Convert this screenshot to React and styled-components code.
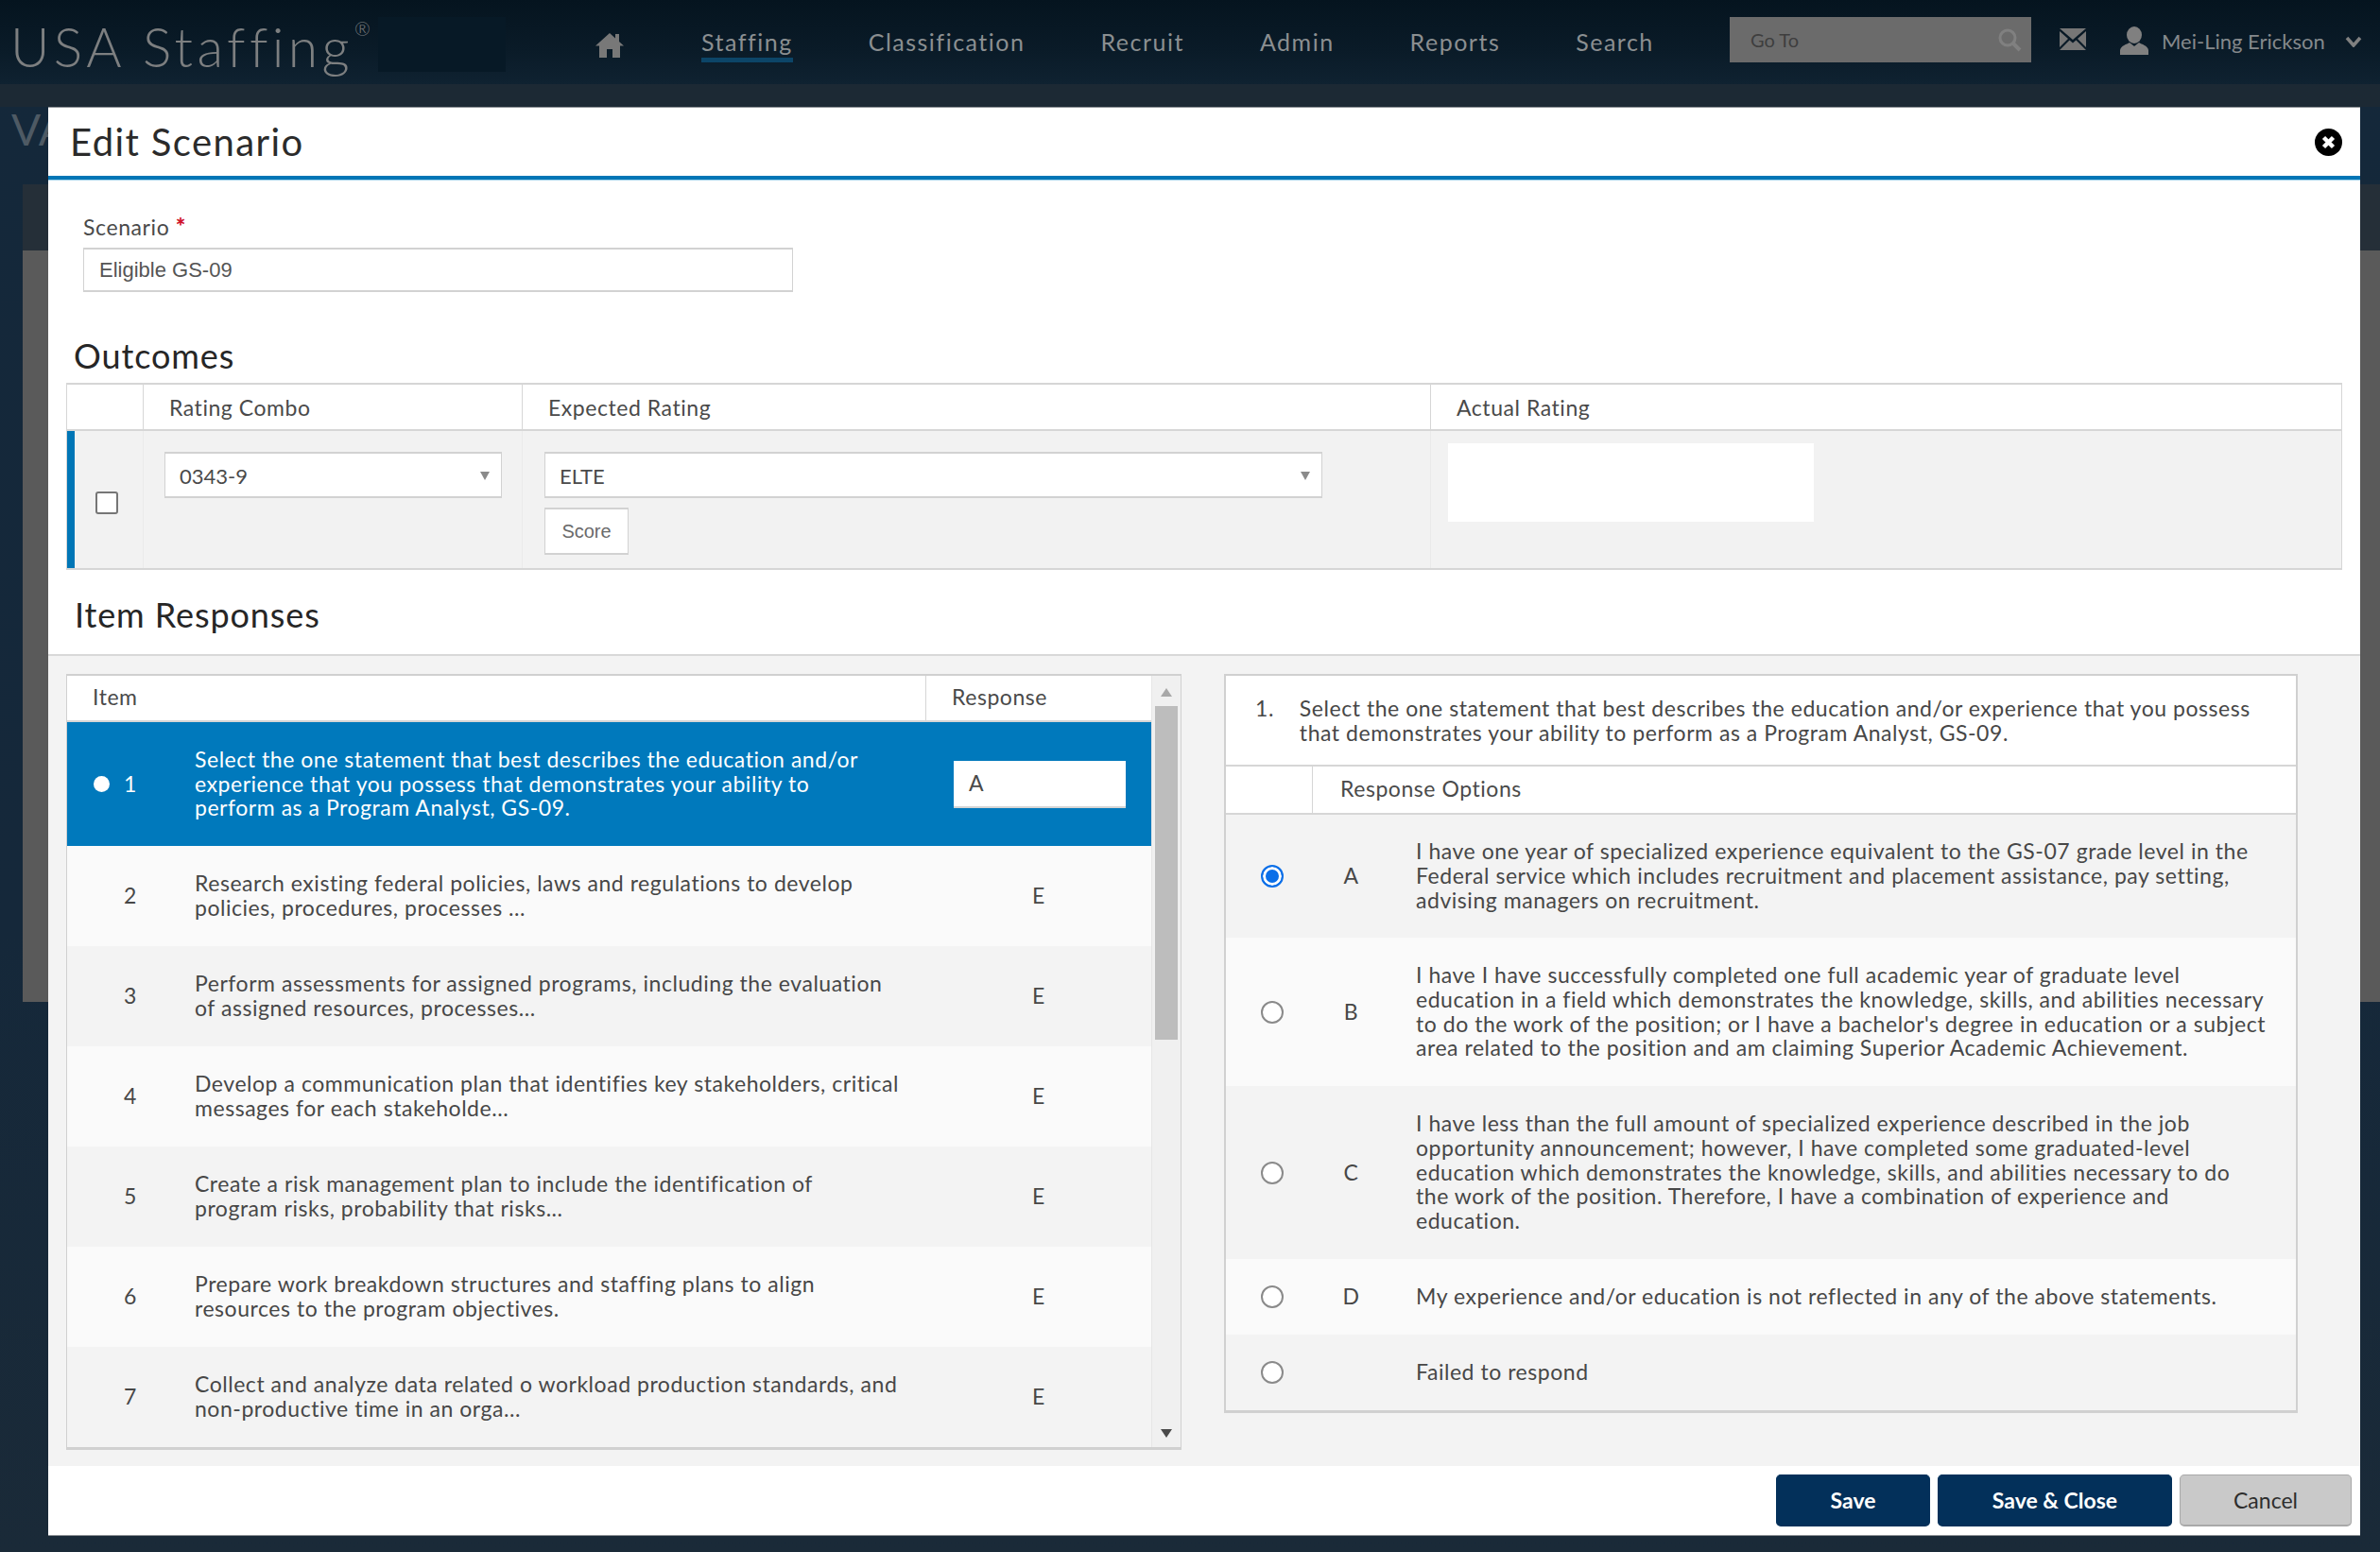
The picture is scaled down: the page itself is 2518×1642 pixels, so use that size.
import React from "react";
import styled, { createGlobalStyle } from "styled-components";

const Global = createGlobalStyle`
  html, body { margin: 0; padding: 0; background: #15283a; }
  * { box-sizing: border-box; }
  body { font-family: Lato, "Noto Sans", sans-serif; }
`;

const Screen = styled.div`
  position: relative;
  width: 2518px;
  height: 1642px;
  overflow: hidden;
  display: flex;
  flex-direction: column;
  background: linear-gradient(180deg, #14283a 0%, #15283a 60%, #1a2a38 100%);
`;
const TopBar = styled.header`
  height: 89px;
  flex: none;
  display: flex;
  align-items: flex-start;
  background: linear-gradient(180deg, #05141f 0%, #0a1b28 60%, #0f2231 100%);
  color: #85898c;
`;
const Logo = styled.div`
  margin-left: 11px;
  margin-top: 18px;
  width: 389px;
  flex: none;
  display: flex;
  align-items: flex-start;
  font-size: 57px;
  line-height: 62px;
  font-weight: 300;
  letter-spacing: 4.4px;
  color: #7d7f80;
  white-space: nowrap;
`;
const LogoMark = styled.span`
  font-size: 20px;
  line-height: 24px;
  letter-spacing: 0;
  margin-left: 1px;
`;
const LogoShade = styled.div`
  width: 135px;
  height: 58px;
  margin-top: 18px;
  flex: none;
  background: #071926;
`;
const HomeLink = styled.div`
  width: 207px;
  flex: none;
  padding: 34px 0 0 95px;
  svg { display: block; }
`;
const Nav = styled.nav`
  display: flex;
  gap: 80px;
  flex: none;
  width: 1088px;
`;
const NavItem = styled.div`
  font-size: 25px;
  line-height: 30px;
  padding-top: 29px;
  height: 66px;
  letter-spacing: 1.5px;
  color: #8b8f91;
  border-bottom: ${(p) => (p.$active ? "5px solid #0c4568" : "none")};
`;
const GoTo = styled.div`
  width: 319px;
  height: 48px;
  margin-top: 18px;
  flex: none;
  background: #6b6b6b;
  display: flex;
  align-items: center;
  justify-content: space-between;
  padding: 0 10px 0 22px;
  font-size: 20px;
  color: #3e3e3e;
`;
const MailIcon = styled.div`
  margin: 30px 0 0 30px;
  flex: none;
  svg { display: block; }
`;
const UserBox = styled.div`
  margin: 28px 0 0 36px;
  display: flex;
  align-items: flex-start;
  flex: none;
  font-size: 22px;
  line-height: 30px;
  color: #85898c;
  svg { display: block; }
`;
const UserName = styled.span`
  margin: 1px 20px 0 14px;
  width: 174px;
  white-space: nowrap;
`;
const Chevron = styled.span`
  margin-top: 10px;
  svg { display: block; }
`;
const SubBand = styled.div`
  height: 24px;
  flex: none;
  background: #1c2934;
`;
const Behind = styled.div`
  flex: 1;
  display: flex;
  flex-direction: column;
  padding: 0 0 0 24px;
  position: relative;
`;
const PageTitle = styled.div`
  font-size: 46px;
  line-height: 48px;
  margin-left: -12px;
  height: 82px;
  color: #4e5a64;
  white-space: nowrap;
`;
const BehindCardHead = styled.div`
  height: 70px;
  background: #252f38;
`;
const BehindCard = styled.div`
  height: 795px;
  background: #5a5a5a;
`;
const Modal = styled.section`
  position: absolute;
  left: 51px;
  top: 113px;
  width: 2446px;
  height: 1511px;
  background: #fff;
  display: flex;
  flex-direction: column;
  border-top: 1px solid #8a8f93;
  box-shadow: 0 1px 0 #8a8f93;
`;
const ModalHead = styled.div`
  height: 76px;
  flex: none;
  display: flex;
  align-items: center;
  justify-content: space-between;
  padding: 0 19px 0 23px;
  border-bottom: 4px solid #0076b6;
  box-shadow: 0 1px 0 #9fd0ea;
`;
const ModalTitle = styled.h1`
  margin: 0;
  font-size: 40px;
  font-weight: 400;
  letter-spacing: 1.4px;
  color: #2b2b2b;
`;
const FormBlock = styled.div`
  padding: 35px 0 0 37px;
  flex: none;
  height: 165px;
`;
const FieldLabel = styled.label`
  display: block;
  font-size: 23px;
  line-height: 28px;
  letter-spacing: 0.6px;
  color: #4a4a4a;
  i { color: #d0142c; font-style: normal; font-weight: 900; font-size: 25px; margin-left: 0; }
`;
const TextBox = styled.div`
  margin-top: 8px;
  width: 751px;
  height: 47px;
  background: #fff;
  border: 1px solid #d2d2d2;
  border-width: 2px 1px;
  padding-left: 16px;
  display: flex;
  align-items: center;
  font: 22px "Liberation Sans", Arial, sans-serif;
  color: #555;
`;
const Heading = styled.h2`
  margin: 0;
  font-size: 36px;
  line-height: 42px;
  letter-spacing: 0.9px;
  font-weight: 400;
  color: #262626;
  padding-left: ${(p) => p.$left}px;
  padding-top: ${(p) => p.$top ?? 0}px;
  height: ${(p) => p.$h}px;
  flex: none;
`;
const OutcomeTable = styled.div`
  margin-left: 19px;
  width: 2408px;
  flex: none;
  border: 1px solid #d6d6d6;
  border-width: 2px 1px 2px 1px;
`;
const OutcomeHead = styled.div`
  display: grid;
  grid-template-columns: 80px 401px 961px 1fr;
  height: 49px;
  border-bottom: 2px solid #d6d6d6;
`;
const HeadCell = styled.div`
  display: flex;
  align-items: center;
  padding-left: ${(p) => p.$pad ?? 27}px;
  padding-bottom: ${(p) => p.$lift ?? 0}px;
  font-size: 23px;
  letter-spacing: 0.55px;
  color: #4a4a4a;
  border-left: ${(p) => (p.$first ? "none" : "1px solid #d6d6d6")};
  white-space: nowrap;
`;
const OutcomeRow = styled.div`
  display: grid;
  grid-template-columns: 72px 401px 961px 1fr;
  height: 145px;
  background: #f2f2f2;
  border-left: 8px solid #0076b6;
`;
const CheckCell = styled.div`
  display: flex;
  align-items: flex-start;
  padding: 64px 0 0 22px;
`;
const Check = styled.span`
  display: block;
  width: 24px;
  height: 24px;
  background: #fff;
  border: 2px solid #767676;
  border-radius: 3px;
`;
const Cell = styled.div`
  padding: ${(p) => p.$pad};
  border-left: 1px solid #eaeaea;
`;
const Select = styled.div`
  width: ${(p) => p.$w}px;
  height: 49px;
  background: #fff;
  border: 1px solid #d2d2d2;
  border-width: 2px 1px;
  display: flex;
  align-items: center;
  justify-content: space-between;
  padding: 2px 12px 0 15px;
  font-size: 22px;
  color: #4a4a4a;
  &::after {
    content: "";
    border: 5px solid transparent;
    border-top: 9px solid #8a8a8a;
    border-bottom: 0;
  }
`;
const ScoreButton = styled.button`
  display: block;
  margin-top: 10px;
  width: 89px;
  height: 50px;
  background: #fff;
  border: 1px solid #d2d2d2;
  border-width: 2px 1px;
  padding: 0;
  font-size: 20px;
  font-family: "Liberation Sans", Arial, sans-serif;
  color: #6a6a6a;
`;
const ActualBox = styled.div`
  width: 387px;
  height: 83px;
  background: #fff;
`;
const ResponseArea = styled.div`
  flex: 1;
  background: #f3f3f3;
  border-top: 2px solid #d8d8d8;
  display: flex;
  align-items: flex-start;
  padding: 19px 0 0 19px;
  gap: 45px;
`;
const ItemPanel = styled.div`
  width: 1180px;
  height: 821px;
  flex: none;
  display: flex;
  background: #fff;
  border: 1px solid #d0d0d0;
  border-width: 2px 1px 3px;
  overflow: hidden;
`;
const ItemTable = styled.div`
  width: 1147px;
  flex: none;
`;
const ItemHead = styled.div`
  display: grid;
  grid-template-columns: 908px 1fr;
  height: 49px;
  border-bottom: 2px solid #d6d6d6;
`;
const BodyText = styled.div`
  font-size: 23px;
  line-height: 25.7px;
  letter-spacing: 0.54px;
  color: #474747;
`;
const ItemRow = styled(BodyText)`
  display: grid;
  grid-template-columns: 135px 774px 1fr;
  align-items: center;
  height: ${(p) => (p.$active ? 131 : 106)}px;
  background: ${(p) => (p.$active ? "#0079bc" : p.$odd ? "#f3f3f3" : "#fafafa")};
  color: ${(p) => (p.$active ? "#fff" : "#474747")};
`;
const ItemNum = styled.div`
  display: flex;
  align-items: center;
  justify-content: flex-end;
  gap: 15px;
  padding-right: 61px;
`;
const Bullet = styled.span`
  width: 17px;
  height: 17px;
  border-radius: 50%;
  background: #fff;
`;
const ItemText = styled.div`
  white-space: nowrap;
`;
const Line = styled.span`
  display: block;
  white-space: nowrap;
`;
const ItemValue = styled.div`
  text-align: center;
`;
const ValueBox = styled.div`
  margin-left: 29px;
  width: 182px;
  height: 50px;
  background: #fff;
  border-bottom: 2px solid #d4d4d4;
  display: flex;
  align-items: center;
  padding-left: 16px;
  color: #4a4a4a;
`;
const ScrollTrack = styled.div`
  flex: 1;
  position: relative;
  background: #f0f0f0;
  display: flex;
  flex-direction: column;
  align-items: center;
  border-left: 1px solid #e6e6e6;
`;
const ScrollUp = styled.span`
  margin-top: 13px;
  border: 6px solid transparent;
  border-bottom: 9px solid #a8a8a8;
  border-top: 0;
`;
const ScrollThumb = styled.div`
  margin-top: 10px;
  width: 24px;
  height: 353px;
  background: #bdbdbd;
`;
const ScrollDown = styled.span`
  margin-top: auto;
  margin-bottom: 10px;
  border: 6px solid transparent;
  border-top: 9px solid #4a4a4a;
  border-bottom: 0;
`;
const AnswerPanel = styled.div`
  width: 1136px;
  height: 782px;
  flex: none;
  background: #fff;
  border: 1px solid #d0d0d0;
  border-width: 2px 2px 3px;
`;
const Question = styled(BodyText)`
  height: 96px;
  padding: 22px 0 0 31px;
  display: flex;
  gap: 27px;
  border-bottom: 2px solid #d6d6d6;
`;
const OptionsHead = styled.div`
  display: grid;
  grid-template-columns: 91px 1fr;
  height: 51px;
  border-bottom: 2px solid #d6d6d6;
`;
const OptionRow = styled(BodyText)`
  display: grid;
  grid-template-columns: 92px 109px 1fr;
  align-items: center;
  height: ${(p) => p.$h}px;
  background: ${(p) => (p.$odd ? "#f3f3f3" : "#fafafa")};
`;
const RadioCell = styled.div`
  padding-left: 37px;
`;
const Radio = styled.span`
  display: block;
  width: 24px;
  height: 24px;
  border-radius: 50%;
  background: ${(p) => (p.$on ? "#0b6fe8" : "#fff")};
  border: 2px solid ${(p) => (p.$on ? "#0b6fe8" : "#8a8a8a")};
  box-shadow: ${(p) => (p.$on ? "inset 0 0 0 3px #fff" : "none")};
`;
const Letter = styled.div`
  text-align: center;
  padding-right: 28px;
`;
const Footer = styled.div`
  height: 73px;
  flex: none;
  display: flex;
  justify-content: flex-end;
  gap: 8px;
  padding: 9px 9px 0 0;
`;
const FootButton = styled.button`
  width: ${(p) => p.$w}px;
  height: 55px;
  border-radius: 5px;
  border: 1px solid ${(p) => (p.$plain ? "#a9a9a9" : "#02305a")};
  border-bottom-width: 2px;
  background: ${(p) => (p.$plain ? "#c9c9c9" : "#03305a")};
  color: ${(p) => (p.$plain ? "#2e2e2e" : "#fff")};
  font-family: Lato, sans-serif;
  font-size: 23px;
  font-weight: ${(p) => (p.$plain ? 400 : 700)};
  padding: 0;
`;

const items = [
  [2, ["Research existing federal policies, laws and regulations to develop", "policies, procedures, processes ..."]],
  [3, ["Perform assessments for assigned programs, including the evaluation", "of assigned resources, processes..."]],
  [4, ["Develop a communication plan that identifies key stakeholders, critical", "messages for each stakeholde..."]],
  [5, ["Create a risk management plan to include the identification of", "program risks, probability that risks..."]],
  [6, ["Prepare work breakdown structures and staffing plans to align", "resources to the program objectives."]],
  [7, ["Collect and analyze data related o workload production standards, and", "non-productive time in an orga..."]],
];

const options = [
  ["A", 130, true, ["I have one year of specialized experience equivalent to the GS-07 grade level in the", "Federal service which includes recruitment and placement assistance, pay setting,", "advising managers on recruitment."]],
  ["B", 157, false, ["I have I have successfully completed one full academic year of graduate level", "education in a field which demonstrates the knowledge, skills, and abilities necessary", "to do the work of the position; or I have a bachelor's degree in education or a subject", "area related to the position and am claiming Superior Academic Achievement."]],
  ["C", 183, false, ["I have less than the full amount of specialized experience described in the job", "opportunity announcement; however, I have completed some graduated-level", "education which demonstrates the knowledge, skills, and abilities necessary to do", "the work of the position. Therefore, I have a combination of experience and", "education."]],
  ["D", 80, false, ["My experience and/or education is not reflected in any of the above statements."]],
  ["", 80, false, ["Failed to respond"]],
];

const Lines = ({ lines }) => lines.map((l) => <Line key={l}>{l}</Line>);

export default function App() {
  return (
    <Screen>
      <Global />
      <TopBar>
        <Logo>USA Staffing<LogoMark>®</LogoMark></Logo>
        <LogoShade />
        <HomeLink>
          <svg width="30" height="27" viewBox="0 0 30 27" fill="#787878">
            <path d="M15 1 L21 6.5 V2 H25 V10 L30 14.5 H26 V27 H18 V18 H12 V27 H4 V14.5 H0 Z" />
          </svg>
        </HomeLink>
        <Nav>
          <NavItem $active>Staffing</NavItem>
          <NavItem>Classification</NavItem>
          <NavItem>Recruit</NavItem>
          <NavItem>Admin</NavItem>
          <NavItem>Reports</NavItem>
          <NavItem>Search</NavItem>
        </Nav>
        <GoTo>
          Go To
          <svg width="26" height="26" viewBox="0 0 26 26" fill="none" stroke="#808080" strokeWidth="3">
            <circle cx="11" cy="11" r="8" />
            <path d="M17 17 L24 24" strokeWidth="4" />
          </svg>
        </GoTo>
        <MailIcon>
          <svg width="28" height="23" viewBox="0 0 28 23" fill="#767676">
            <path d="M0 0 H28 L14 12 Z M0 3 L9 11 L0 20 Z M28 3 V20 L19 11 Z M0 23 L10.5 12.5 L14 15.5 L17.5 12.5 L28 23 Z" />
          </svg>
        </MailIcon>
        <UserBox>
          <svg width="30" height="30" viewBox="0 0 30 30" fill="#808080">
            <ellipse cx="15" cy="9" rx="8" ry="9" />
            <path d="M0 30 V25 C1 20 7 19 10 17 L15 21 L20 17 C23 19 29 20 30 25 V30 Z" />
          </svg>
          <UserName>Mei-Ling Erickson</UserName>
          <Chevron>
            <svg width="18" height="12" viewBox="0 0 18 12" fill="none" stroke="#808080" strokeWidth="3.5">
              <path d="M2 2 L9 10 L16 2" />
            </svg>
          </Chevron>
        </UserBox>
      </TopBar>
      <SubBand />
      <Behind>
        <PageTitle>VA</PageTitle>
        <BehindCardHead />
        <BehindCard />
      </Behind>
      <Modal>
        <ModalHead>
          <ModalTitle>Edit Scenario</ModalTitle>
          <svg width="29" height="29" viewBox="0 0 29 29">
            <circle cx="14.5" cy="14.5" r="14.5" fill="#000" />
            <path d="M9.5 9.5 L19.5 19.5 M19.5 9.5 L9.5 19.5" stroke="#fff" strokeWidth="4.5" />
          </svg>
        </ModalHead>
        <FormBlock>
          <FieldLabel>Scenario <i>*</i></FieldLabel>
          <TextBox>Eligible GS-09</TextBox>
        </FormBlock>
        <Heading $left={27} $h={50}>Outcomes</Heading>
        <OutcomeTable>
          <OutcomeHead>
            <HeadCell $first />
            <HeadCell>Rating Combo</HeadCell>
            <HeadCell>Expected Rating</HeadCell>
            <HeadCell>Actual Rating</HeadCell>
          </OutcomeHead>
          <OutcomeRow>
            <CheckCell><Check /></CheckCell>
            <Cell $pad="22px 0 0 22px"><Select $w={357}>0343-9</Select></Cell>
            <Cell $pad="22px 0 0 23px">
              <Select $w={823}>ELTE</Select>
              <ScoreButton>Score</ScoreButton>
            </Cell>
            <Cell $pad="13px 0 0 18px"><ActualBox /></Cell>
          </OutcomeRow>
        </OutcomeTable>
        <Heading $left={28} $h={89} $top={26}>Item Responses</Heading>
        <ResponseArea>
          <ItemPanel>
            <ItemTable>
              <ItemHead>
                <HeadCell $first $lift={3}>Item</HeadCell>
                <HeadCell $lift={3}>Response</HeadCell>
              </ItemHead>
              <ItemRow $active>
                <ItemNum><Bullet />1</ItemNum>
                <ItemText>
                  <Lines lines={["Select the one statement that best describes the education and/or", "experience that you possess that demonstrates your ability to", "perform as a Program Analyst, GS-09."]} />
                </ItemText>
                <ValueBox>A</ValueBox>
              </ItemRow>
              {items.map(([n, lines], i) => (
                <ItemRow key={n} $odd={i % 2 === 1}>
                  <ItemNum>{n}</ItemNum>
                  <ItemText><Lines lines={lines} /></ItemText>
                  <ItemValue>E</ItemValue>
                </ItemRow>
              ))}
            </ItemTable>
            <ScrollTrack>
              <ScrollUp />
              <ScrollThumb />
              <ScrollDown />
            </ScrollTrack>
          </ItemPanel>
          <AnswerPanel>
            <Question>
              <span>1.</span>
              <div>
                <Lines lines={["Select the one statement that best describes the education and/or experience that you possess", "that demonstrates your ability to perform as a Program Analyst, GS-09."]} />
              </div>
            </Question>
            <OptionsHead>
              <HeadCell $first />
              <HeadCell $pad={29} $lift={3}>Response Options</HeadCell>
            </OptionsHead>
            {options.map(([letter, h, on, lines], i) => (
              <OptionRow key={lines[0]} $h={h} $odd={i % 2 === 0}>
                <RadioCell><Radio $on={on} /></RadioCell>
                <Letter>{letter}</Letter>
                <div><Lines lines={lines} /></div>
              </OptionRow>
            ))}
          </AnswerPanel>
        </ResponseArea>
        <Footer>
          <FootButton $w={163}>Save</FootButton>
          <FootButton $w={248}>Save &amp; Close</FootButton>
          <FootButton $w={182} $plain>Cancel</FootButton>
        </Footer>
      </Modal>
    </Screen>
  );
}
